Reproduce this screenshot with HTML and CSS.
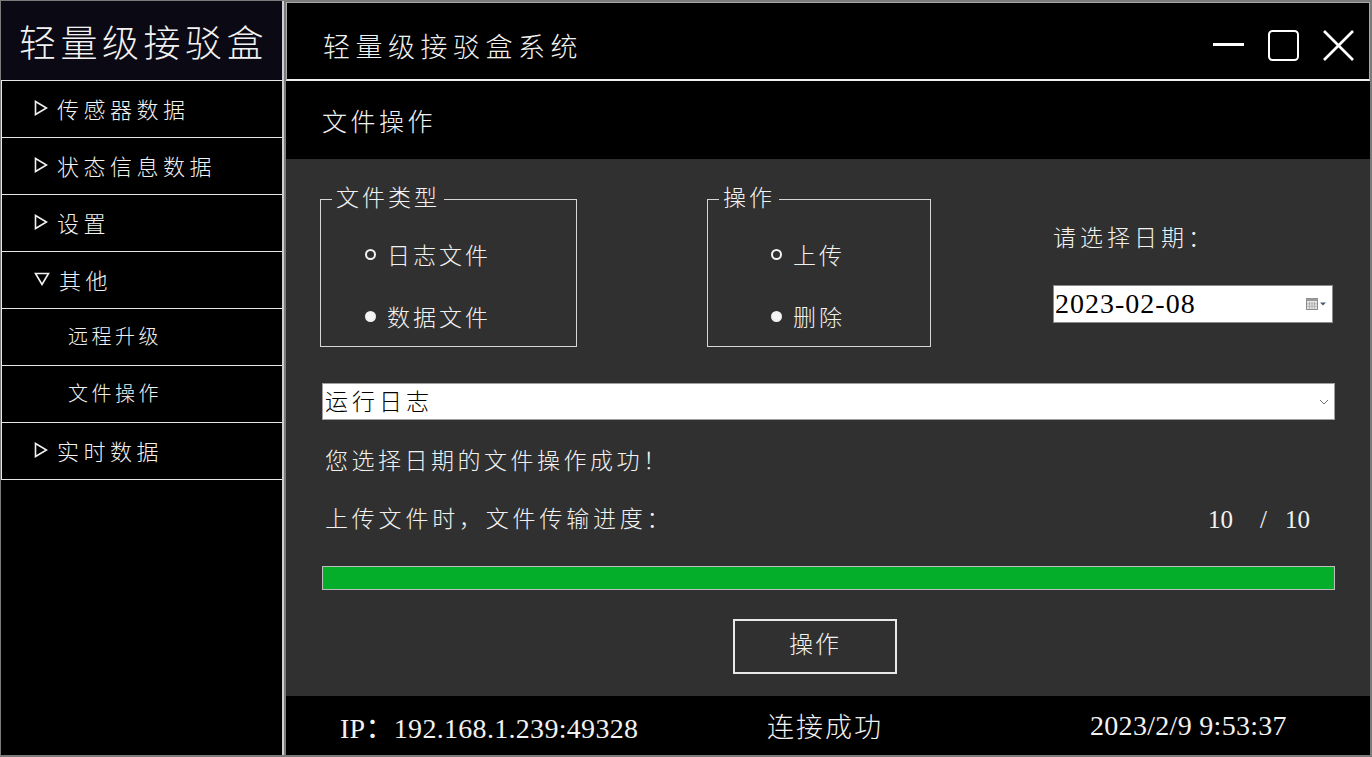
FILE: index.html
```html
<!DOCTYPE html>
<html lang="zh-CN">
<head>
    <meta charset="UTF-8">
    <meta name="viewport" content="width=device-width, initial-scale=1.0">
    <title>轻量级接驳盒系统</title>
    <link rel="stylesheet" href="styles.css">
</head>
<body>
    <div class="window">
        <aside class="sidebar">
            <div class="logo">轻量级接驳盒</div>
            <ul class="menu">
                <li class="menu-item">
                    <svg class="arrow" width="14" height="16" viewBox="0 0 14 16"><polygon points="1.5,1.5 12.5,8 1.5,14.5" fill="none" stroke="#f2f2f2" stroke-width="1.6"/></svg>
                    传感器数据
                </li>
                <li class="menu-item">
                    <svg class="arrow" width="14" height="16" viewBox="0 0 14 16"><polygon points="1.5,1.5 12.5,8 1.5,14.5" fill="none" stroke="#f2f2f2" stroke-width="1.6"/></svg>
                    状态信息数据
                </li>
                <li class="menu-item">
                    <svg class="arrow" width="14" height="16" viewBox="0 0 14 16"><polygon points="1.5,1.5 12.5,8 1.5,14.5" fill="none" stroke="#f2f2f2" stroke-width="1.6"/></svg>
                    设置
                </li>
                <li class="menu-item">
                    <svg class="arrow" width="16" height="14" viewBox="0 0 16 14"><polygon points="1.5,1.5 14.5,1.5 8,12.5" fill="none" stroke="#f2f2f2" stroke-width="1.6"/></svg>
                    其他
                </li>
                <li class="menu-item sub">远程升级</li>
                <li class="menu-item sub">文件操作</li>
                <li class="menu-item">
                    <svg class="arrow" width="14" height="16" viewBox="0 0 14 16"><polygon points="1.5,1.5 12.5,8 1.5,14.5" fill="none" stroke="#f2f2f2" stroke-width="1.6"/></svg>
                    实时数据
                </li>
            </ul>
        </aside>

        <main class="main">
            <header class="titlebar">
                <h1>轻量级接驳盒系统</h1>
                <div class="controls">
                    <svg width="31" height="31" viewBox="0 0 31 31"><line x1="0" y1="14.5" x2="31" y2="14.5" stroke="#fff" stroke-width="3"/></svg>
                    <svg width="31" height="31" viewBox="0 0 31 31"><rect x="1" y="1" width="29" height="29" rx="3.5" fill="none" stroke="#fff" stroke-width="2"/></svg>
                    <svg width="31" height="31" viewBox="0 0 31 31"><line x1="1" y1="1" x2="30" y2="30" stroke="#fff" stroke-width="2.6"/><line x1="30" y1="1" x2="1" y2="30" stroke="#fff" stroke-width="2.6"/></svg>
                </div>
            </header>

            <div class="page-head">文件操作</div>

            <section class="content">
                <div class="options">
                    <fieldset class="group group-type">
                        <legend>文件类型</legend>
                        <label class="radio"><span class="dot"></span>日志文件</label>
                        <label class="radio checked"><span class="dot"></span>数据文件</label>
                    </fieldset>
                    <fieldset class="group group-op">
                        <legend>操作</legend>
                        <label class="radio"><span class="dot"></span>上传</label>
                        <label class="radio checked"><span class="dot"></span>删除</label>
                    </fieldset>
                    <div class="date-col">
                        <div class="date-label">请选择日期：</div>
                        <div class="date-box">
                            <span>2023-02-08</span>
                            <svg width="22" height="14" viewBox="0 0 22 14">
                                <rect x="0.5" y="1.5" width="11" height="11" fill="#e4e4e4" stroke="#8c8c8c"/>
                                <rect x="0.5" y="1.5" width="11" height="2.5" fill="#9a9a9a"/>
                                <path d="M3.5 5v7M6 5v7M8.5 5v7M1 6.8h10M1 9.3h10" stroke="#a8a8a8" stroke-width="0.8"/>
                                <polygon points="14,5.5 20,5.5 17,8.5" fill="#4b5875"/>
                            </svg>
                        </div>
                    </div>
                </div>

                <div class="select">
                    <span>运行日志</span>
                    <svg width="10" height="6" viewBox="0 0 10 6"><polyline points="1,1 5,5 9,1" fill="none" stroke="#707070" stroke-width="1"/></svg>
                </div>

                <p class="msg">您选择日期的文件操作成功！</p>

                <div class="progress-row">
                    <span>上传文件时，文件传输进度：</span>
                    <span class="count"><span>10</span><span class="slash">/</span><span class="total">10</span></span>
                </div>

                <div class="progress"><div class="bar" style="width: 100%"></div></div>

                <button class="action">操作</button>
            </section>

            <footer class="status">
                <span class="ip">IP：192.168.1.239:49328</span>
                <span class="conn">连接成功</span>
                <span class="time">2023/2/9 9:53:37</span>
            </footer>
        </main>
    </div>
</body>
</html>
```

FILE: styles.css
```css
* {
    box-sizing: border-box;
}
body {
    margin: 0;
    font-family: "Liberation Serif", "Noto Sans CJK SC", serif;
    color: #f2f2f2;
    background-color: #7b7b7b;
}
.window {
    display: flex;
    height: 757px;
    padding: 1px 2px 2px 1px;
}

/* sidebar */
.sidebar {
    width: 283px;
    margin-right: 2px;
    background-color: #000;
    border-right: 2px solid #cfcfcf;
    display: flex;
    flex-direction: column;
}
.logo {
    height: 80px;
    background-color: #0b0a14;
    border-bottom: 1px solid #e6e6e6;
    display: flex;
    align-items: center;
    padding-left: 18px;
    padding-top: 1px;
    font-size: 37px;
    letter-spacing: 4.5px;
    font-weight: 300;
}
.menu {
    list-style: none;
    margin: 0;
    padding: 0;
}
.menu-item {
    height: 57px;
    border-left: 1px solid #e6e6e6;
    border-bottom: 1px solid #e6e6e6;
    display: flex;
    align-items: center;
    padding: 0 0 3px 32px;
    font-size: 22px;
    letter-spacing: 4.5px;
    font-weight: 300;
}
.menu-item .arrow {
    margin-right: 9px;
    flex-shrink: 0;
}
.menu-item.sub {
    padding-left: 66px;
    font-size: 20px;
    letter-spacing: 3.5px;
}

/* main */
.main {
    flex: 1;
    margin-top: 1px;
    display: flex;
    flex-direction: column;
    background-color: #000;
}
.titlebar {
    height: 79px;
    border: 1px solid #a8a8a8;
    border-bottom: 2px solid #f0f0f0;
    display: flex;
    align-items: center;
    justify-content: space-between;
    padding: 8px 15px 0 36px;
}
.titlebar h1 {
    margin: 0;
    font-size: 27px;
    font-weight: 300;
    letter-spacing: 5.5px;
}
.controls {
    display: flex;
    gap: 24px;
}
.page-head {
    height: 78px;
    display: flex;
    align-items: center;
    padding-left: 36px;
    font-size: 25px;
    letter-spacing: 3.5px;
    font-weight: 300;
}

.content {
    flex: 1;
    background-color: #303030;
    padding: 28px 35px 0 36px;
    display: flex;
    flex-direction: column;
    font-size: 23px;
    font-weight: 300;
}
.options {
    display: flex;
    margin-left: -2px;
    height: 160px;
}
.group {
    margin: 0;
    padding: 28px 0 0 0;
    border: 1px solid #d6d6d6;
    display: flex;
    flex-direction: column;
    gap: 32px;
    min-width: 0;
}
.group legend {
    margin-left: 11px;
    padding: 0 4px;
    font-size: 23px;
    line-height: 24px;
    letter-spacing: 3px;
}
.group-type {
    width: 257px;
    margin-right: 130px;
}
.group-type .radio {
    padding-left: 44px;
}
.group-op {
    width: 224px;
    margin-right: 122px;
}
.group-op .radio {
    padding-left: 63px;
}
.radio {
    height: 30px;
    display: flex;
    align-items: center;
    letter-spacing: 3px;
}
.radio .dot {
    width: 11px;
    height: 11px;
    border-radius: 50%;
    border: 2px solid #f2f2f2;
    margin-right: 11px;
    flex-shrink: 0;
}
.radio.checked .dot {
    background-color: #f5f5f5;
}
.date-col {
    width: 280px;
}
.date-label {
    margin-top: 37px;
    line-height: 30px;
    letter-spacing: 4px;
}
.date-box {
    margin-top: 31px;
    height: 38px;
    background-color: #fff;
    border: 1px solid #8a8a8a;
    color: #000;
    display: flex;
    align-items: center;
    justify-content: space-between;
    padding: 0 4px 0 1px;
    font-family: "Liberation Serif", serif;
    font-size: 28px;
    font-weight: 400;
    letter-spacing: 1px;
}

.select {
    margin-top: 36px;
    height: 37px;
    background-color: #fff;
    border: 1px solid #a0a0a0;
    color: #000;
    display: flex;
    align-items: center;
    justify-content: space-between;
    padding: 0 5px 4px 2px;
    letter-spacing: 4px;
}
.select svg {
    margin-top: 4px;
}
.msg {
    margin: 27px 0 0 3px;
    line-height: 30px;
    letter-spacing: 3.5px;
}
.progress-row {
    margin: 28px 0 0 3px;
    line-height: 30px;
    display: flex;
    justify-content: space-between;
    letter-spacing: 3.8px;
}
.count {
    display: flex;
    margin-right: 25px;
    font-size: 25px;
    letter-spacing: 0;
    font-weight: 400;
}
.count .slash {
    margin-left: 27px;
}
.count .total {
    margin-left: 18px;
}
.progress {
    margin-top: 31px;
    height: 24px;
    border: 1px solid #bdbdbd;
    background-color: #303030;
}
.progress .bar {
    height: 100%;
    background-color: #05ae2a;
}
.action {
    margin: 29px 0 0 411px;
    width: 164px;
    height: 55px;
    padding: 0 0 8px;
    background-color: transparent;
    border: 2px solid #e8e8e8;
    color: #f2f2f2;
    font-family: inherit;
    font-size: 24px;
    font-weight: 300;
    letter-spacing: 2px;
}

.status {
    height: 59px;
    display: grid;
    grid-template-columns: 427px 323px 1fr;
    align-items: center;
    padding: 0 0 0 54px;
    font-size: 28px;
}
.ip {
    letter-spacing: 0.3px;
}
.conn {
    font-size: 27px;
    letter-spacing: 2px;
    font-weight: 300;
}
.time {
    letter-spacing: 0.3px;
}
```
